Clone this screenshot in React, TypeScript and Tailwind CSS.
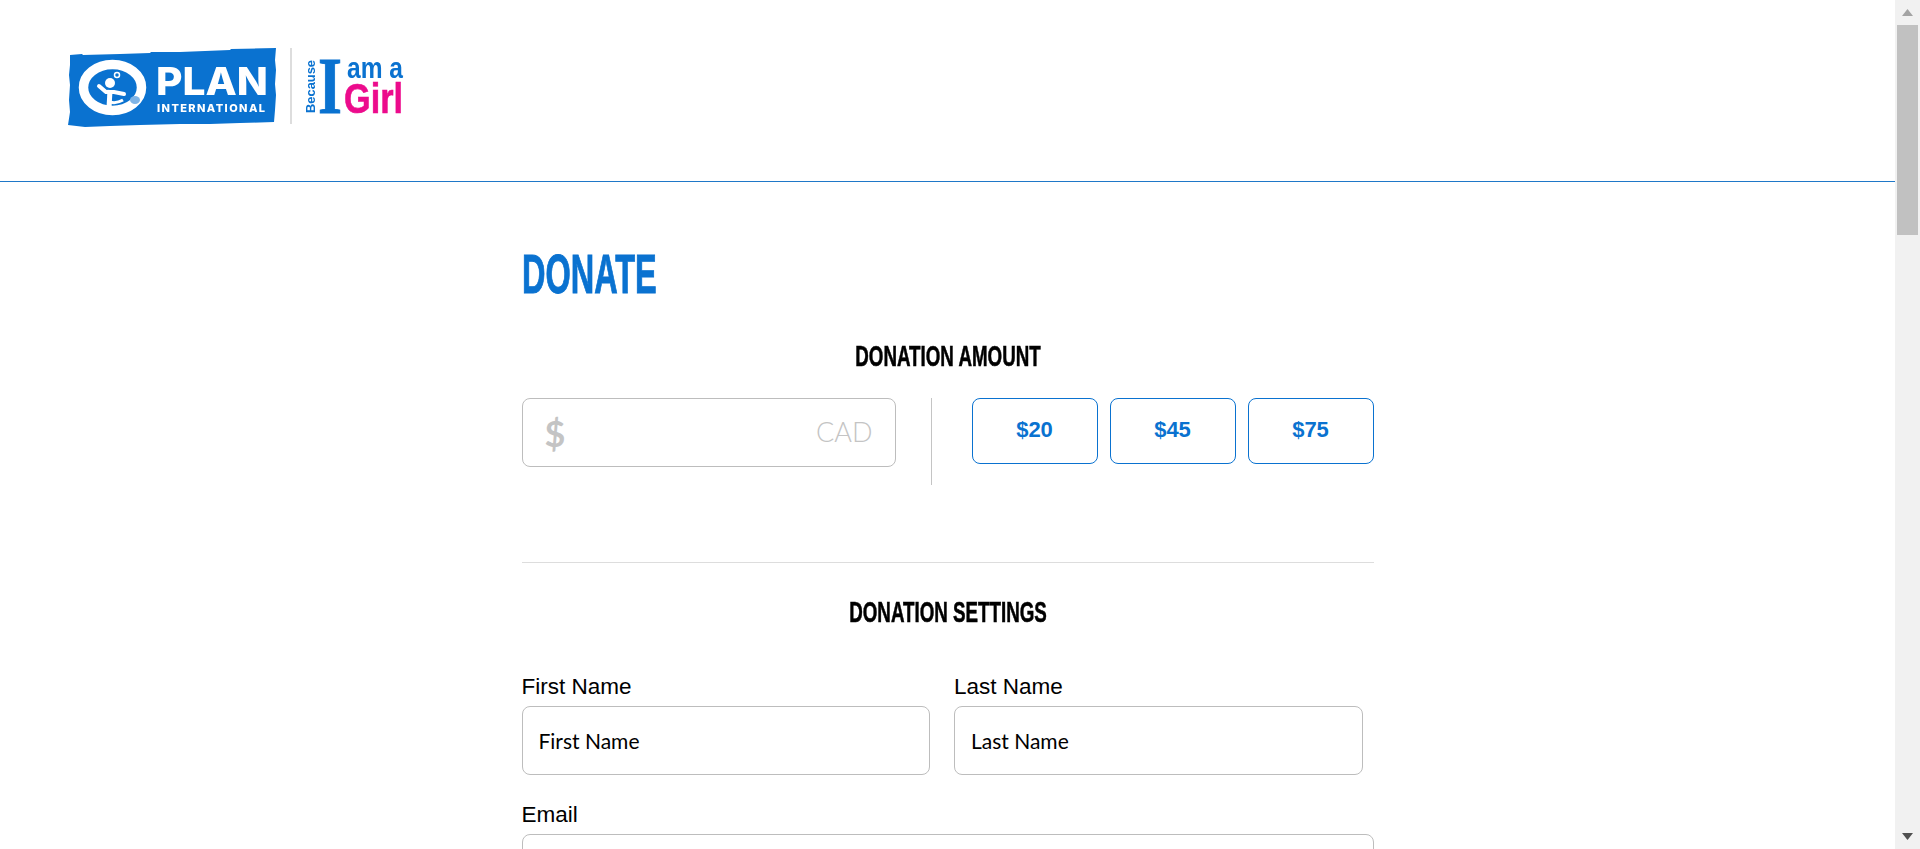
const heading = "font-['Liberation_Sans',sans-serif] font-bold uppercase"
const label = "block text-[22.5px] leading-[26px] text-black font-['Liberation_Sans',sans-serif]"
const field = "flex items-center h-[69px] rounded-lg border border-[#bdbdbd] bg-white px-4 text-[21px] text-black font-['Lato',sans-serif]"

function Logo() {
  return (
    <svg width="350" height="95" viewBox="0 0 350 95" className="blur-[0.5px]">
      <polygon
        points="10,15 22,14 23,15 60,14 90,13 91,12 120,12 170,10 171,9 216,8 215,20 216,30 215,44 216,55 215,70 214,82 180,83 150,84 120,84 80,85 50,86 25,87 8,85 10,72 9,60 10,45 9,35 10,25"
        fill="#0a72d0"
      />
      {/* ring and child */}
      <ellipse cx="52.5" cy="47.5" rx="29" ry="23" fill="none" stroke="#fff" strokeWidth="9.5" />
      <circle cx="50" cy="43" r="5" fill="#fff" />
      <path d="M39 46 L46 52 L54 52 L64 54" fill="none" stroke="#fff" strokeWidth="4" strokeLinecap="round" />
      <path d="M50 50 L49 68" fill="none" stroke="#fff" strokeWidth="5" />
      <path d="M50 62 Q56 64 63 60" fill="none" stroke="#fff" strokeWidth="3" />
      <circle cx="57" cy="35" r="2.5" fill="none" stroke="#fff" strokeWidth="1.5" />
      <ellipse cx="75" cy="60" rx="5" ry="4" fill="#7fb4e6" />
      <text x="96" y="55" fontFamily="Inter" fontWeight="800" fontSize="38.5" fill="#fff" textLength="112" lengthAdjust="spacingAndGlyphs">PLAN</text>
      <text x="97" y="72" fontFamily="Inter" fontWeight="800" fontSize="11" fill="#fff" textLength="108" lengthAdjust="spacing">INTERNATIONAL</text>
      <rect x="230" y="8" width="2" height="76" fill="#ddd" />
      <text transform="translate(255 73) rotate(-90)" fontFamily="Liberation Sans" fontWeight="700" fontSize="13" fill="#0a72d0" textLength="53" lengthAdjust="spacingAndGlyphs">Because</text>
      <text x="258" y="73" fontFamily="Liberation Serif" fontWeight="700" fontSize="80" fill="#0a72d0" stroke="#0a72d0" strokeWidth="0.8" textLength="24" lengthAdjust="spacingAndGlyphs">I</text>
      <text x="287" y="38" fontFamily="Liberation Sans" fontWeight="700" fontSize="30" fill="#0a72d0" textLength="56" lengthAdjust="spacingAndGlyphs">am a</text>
      <text x="284" y="73" fontFamily="Liberation Sans" fontWeight="700" fontSize="43" fill="#ec0b8c" stroke="#ec0b8c" strokeWidth="0.6" textLength="59" lengthAdjust="spacingAndGlyphs">Girl</text>
    </svg>
  )
}

function Scrollbar() {
  return (
    <div className="flex flex-col w-[25px] shrink-0 bg-[#f1f1f1]">
      <div className="h-[25px] flex items-center justify-center">
        <svg width="11" height="7" viewBox="0 0 11 7"><polygon points="5.5,0 11,7 0,7" fill="#a3a3a3" /></svg>
      </div>
      <div className="h-[210px] mx-[2px] bg-[#c1c1c1]" />
      <div className="flex-1" />
      <div className="h-[25px] flex items-center justify-center">
        <svg width="11" height="7" viewBox="0 0 11 7"><polygon points="0,0 11,0 5.5,7" fill="#505050" /></svg>
      </div>
    </div>
  )
}

export default function App() {
  return (
    <div className="flex h-[849px] overflow-hidden bg-white">
      <div className="flex-1 min-w-0">

        {/* Header */}
        <div className="h-[182px] border-b border-[#1f78c8] pl-[60px] pt-[40px]">
          <Logo />
        </div>

        <div className="w-[852px] mx-auto">
          <h1 className={`${heading} text-[56px] leading-[56px] mt-[64px] text-[#0a72d0] origin-left scale-x-[0.58] [-webkit-text-stroke:1px_#0a72d0]`}>Donate</h1>

          {/* Donation amount */}
          <h2 className={`${heading} text-[30px] leading-[30px] mt-[39px] text-black text-center scale-x-[0.625] [-webkit-text-stroke:0.6px_#000]`}>Donation Amount</h2>
          <div className="flex mt-[27px] h-[87px]">
            <div className="flex items-center justify-between w-[374px] h-[69px] rounded-lg border border-[#bdbdbd] px-[22px] font-['Lato',sans-serif]">
              <span className="text-[36px] font-bold text-[#c4c4c4]">$</span>
              <span className="text-[27px] font-light text-[#c4c4c4]">CAD</span>
            </div>
            <div className="w-px bg-[#c4c4c4] ml-[35px] mr-[40px]" />
            <div className="flex flex-1 gap-3 h-[66px]">
              {['$20', '$45', '$75'].map(a => (
                <button key={a} className="flex-1 rounded-lg border border-[#0a72d0] pb-[3px] text-[22px] font-bold text-[#0a72d0] font-['Liberation_Sans',sans-serif]">
                  {a}
                </button>
              ))}
            </div>
          </div>

          <div className="border-t border-[#dddddd] mt-[77px]" />

          {/* Donation settings */}
          <h2 className={`${heading} text-[30px] leading-[30px] mt-[34px] text-black text-center scale-x-[0.625] [-webkit-text-stroke:0.6px_#000]`}>Donation Settings</h2>
          <div className="flex gap-6 mt-[47px] w-[841px]">
            <div className="flex-1">
              <label className={label}>First Name</label>
              <div className={`${field} mt-[6px]`}>First Name</div>
            </div>
            <div className="flex-1">
              <label className={label}>Last Name</label>
              <div className={`${field} mt-[6px]`}>Last Name</div>
            </div>
          </div>
          <label className={`${label} mt-[27px]`}>Email</label>
          <div className={`${field} mt-[6px]`} />
        </div>
      </div>
      <Scrollbar />
    </div>
  )
}
